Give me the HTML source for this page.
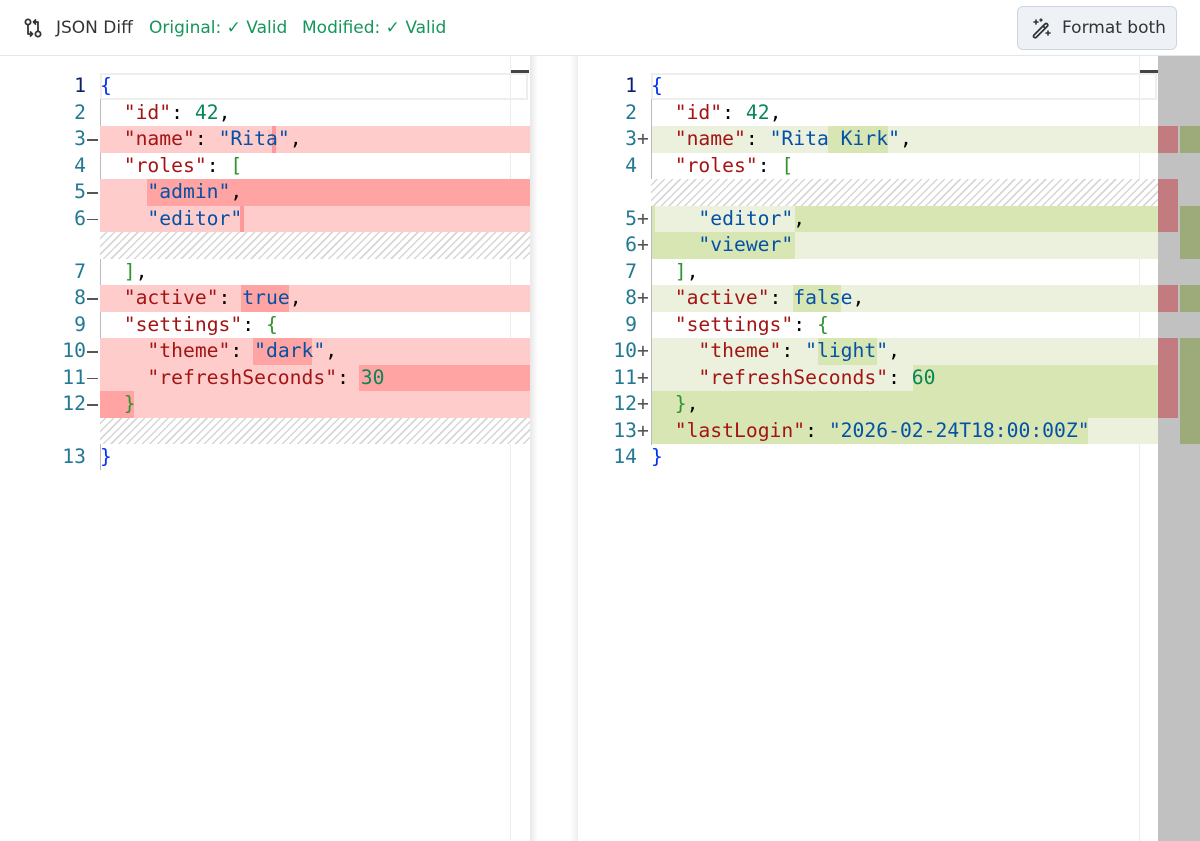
<!DOCTYPE html>
<html><head><meta charset="utf-8"><style>
*{margin:0;padding:0;box-sizing:border-box}
body{width:1200px;height:840px;overflow:hidden;background:#fff;font-family:"Liberation Sans","DejaVu Sans",sans-serif;position:relative}
.hdr{position:absolute;left:0;top:0;width:1200px;height:56px;border-bottom:1px solid #e3e6ea;background:#fff;z-index:2}
.t{position:absolute;top:18px;font-size:17px;font-family:"DejaVu Sans",sans-serif;white-space:nowrap}
.btn{position:absolute;left:1017px;top:6px;width:160px;height:44px;border:1px solid #cdd6e0;border-radius:6px;background:#eef2f7}
.w{position:absolute;left:0;top:1px;width:1200px;height:840px}
.r{position:absolute;height:26.5px;line-height:26.5px;font-family:"DejaVu Sans Mono",monospace;font-size:19.7px;white-space:pre}
.ln{position:absolute;height:26.5px;line-height:26.5px;font-family:"DejaVu Sans Mono",monospace;font-size:19.7px;text-align:right;color:#237893;white-space:pre}
.hl{position:absolute;height:26.5px}
.k{color:#a31515}.s{color:#0451a5}.n{color:#098658}.b1{color:#0431fa}.b2{color:#319331}.p{color:#000}
.hatch{position:absolute;height:26.5px;background:repeating-linear-gradient(-45deg,#fff 0 4px,#d6d6d6 4px 5.5px)}
</style></head><body>
<div class="hdr">
<svg style="position:absolute;left:23px;top:17px" width="20" height="22" viewBox="0 0 20 22" fill="none" stroke="#333" stroke-width="1.8" stroke-linecap="round" stroke-linejoin="round"><circle cx="5" cy="5" r="2.6"/><circle cx="15" cy="17" r="2.6"/><path d="M5 7.6V17h4M15 14.4V5h-4M7.5 15l2 2-2 2M12.5 3l-2 2 2 2"/></svg>
<div class="t" style="left:56px;color:#333">JSON Diff</div>
<div class="t" style="left:149px;color:#16965a">Original: ✓ Valid</div>
<div class="t" style="left:302px;color:#16965a">Modified: ✓ Valid</div>
<div class="btn">
<svg style="position:absolute;left:12px;top:10px" width="22" height="22" viewBox="0 0 22 22" fill="none" stroke="#333" stroke-width="1.8" stroke-linecap="round"><path d="M4 18L15 7a1.6 1.6 0 0 1 2.3 2.3L6.3 20.3A1.6 1.6 0 0 1 4 18zM13 9l2.3 2.3"/><path d="M6 3v4M4 5h4M18 14v4M16 16h4M11 2v2M10 3h2" stroke-width="1.6"/></svg>
<div class="t" style="left:44px;top:11px;color:#333">Format both</div>
</div>
</div>
<div class="w">
<!-- left pane -->
<div style="position:absolute;left:510px;top:55px;width:1px;height:784px;background:#ececec"></div>
<div style="position:absolute;left:511px;top:69px;width:18px;height:3px;background:#444"></div>
<div style="position:absolute;left:530px;top:55px;width:48px;height:785px;background:linear-gradient(90deg,#e8e8e8,#fff 8px,#fff 40px,#eee)"></div>
<div style="position:absolute;left:100px;top:72px;width:428px;height:26.5px;border:2px solid #eeeeee"></div>
<div style="position:absolute;left:100px;top:98px;width:1px;height:371px;background:#bbb"></div>

<div class="hl" style="left:100px;top:125px;width:430px;background:#ffcccc"></div>
<div class="hl" style="left:272px;top:125px;width:4px;background:#f99"></div>
<div class="hl" style="left:100px;top:178px;width:430px;background:#ffcccc"></div>
<div class="hl" style="left:147px;top:178px;width:383px;background:#ffa3a3"></div>
<div class="hl" style="left:100px;top:204.5px;width:430px;background:#ffcccc"></div>
<div class="hl" style="left:240px;top:204.5px;width:4px;background:#f99"></div>
<div class="hatch" style="left:100px;top:231px;width:430px"></div>
<div class="hl" style="left:100px;top:284px;width:430px;background:#ffcccc"></div>
<div class="hl" style="left:241px;top:284px;width:48px;background:#ffa3a3"></div>
<div class="hl" style="left:100px;top:337px;width:430px;height:79.5px;background:#ffcccc"></div>
<div class="hl" style="left:253px;top:337px;width:59px;background:#ffa3a3"></div>
<div class="hl" style="left:359px;top:363.5px;width:171px;background:#ffa3a3"></div>
<div class="hl" style="left:100px;top:390px;width:34px;background:#ffa3a3"></div>
<div class="hatch" style="left:100px;top:416.5px;width:430px"></div>

<div class="ln" style="left:40px;width:46px;top:72px;color:#0b216f">1</div>
<div class="ln" style="left:40px;width:46px;top:98.5px">2</div>
<div class="ln" style="left:40px;width:46px;top:125px">3</div>
<div class="ln" style="left:40px;width:46px;top:151.5px">4</div>
<div class="ln" style="left:40px;width:46px;top:178px">5</div>
<div class="ln" style="left:40px;width:46px;top:204.5px">6</div>
<div class="ln" style="left:40px;width:46px;top:257.5px">7</div>
<div class="ln" style="left:40px;width:46px;top:284px">8</div>
<div class="ln" style="left:40px;width:46px;top:310.5px">9</div>
<div class="ln" style="left:40px;width:46px;top:337px">10</div>
<div class="ln" style="left:40px;width:46px;top:363.5px">11</div>
<div class="ln" style="left:40px;width:46px;top:390px">12</div>
<div class="ln" style="left:40px;width:46px;top:443px">13</div>
<div style="position:absolute;left:87px;top:138px;width:11px;height:1.5px;background:#555"></div>
<div style="position:absolute;left:87px;top:191px;width:11px;height:1.5px;background:#555"></div>
<div style="position:absolute;left:87px;top:217.5px;width:11px;height:1.5px;background:#555"></div>
<div style="position:absolute;left:87px;top:297px;width:11px;height:1.5px;background:#555"></div>
<div style="position:absolute;left:87px;top:350px;width:11px;height:1.5px;background:#555"></div>
<div style="position:absolute;left:87px;top:376.5px;width:11px;height:1.5px;background:#555"></div>
<div style="position:absolute;left:87px;top:403px;width:11px;height:1.5px;background:#555"></div>

<div class="r" style="left:100px;top:72px"><span class="b1">{</span></div>
<div class="r" style="left:100px;top:98.5px">  <span class="k">"id"</span>: <span class="n">42</span>,</div>
<div class="r" style="left:100px;top:125px">  <span class="k">"name"</span>: <span class="s">"Rita"</span>,</div>
<div class="r" style="left:100px;top:151.5px">  <span class="k">"roles"</span>: <span class="b2">[</span></div>
<div class="r" style="left:100px;top:178px">    <span class="s">"admin"</span>,</div>
<div class="r" style="left:100px;top:204.5px">    <span class="s">"editor"</span></div>
<div class="r" style="left:100px;top:257.5px">  <span class="b2">]</span>,</div>
<div class="r" style="left:100px;top:284px">  <span class="k">"active"</span>: <span class="s">true</span>,</div>
<div class="r" style="left:100px;top:310.5px">  <span class="k">"settings"</span>: <span class="b2">{</span></div>
<div class="r" style="left:100px;top:337px">    <span class="k">"theme"</span>: <span class="s">"dark"</span>,</div>
<div class="r" style="left:100px;top:363.5px">    <span class="k">"refreshSeconds"</span>: <span class="n">30</span></div>
<div class="r" style="left:100px;top:390px">  <span class="b2">}</span></div>
<div class="r" style="left:100px;top:443px"><span class="b1">}</span></div>

<!-- right pane -->
<div style="position:absolute;left:1139px;top:55px;width:1px;height:785px;background:#ececec"></div>
<div style="position:absolute;left:1140px;top:69px;width:18px;height:3px;background:#444"></div>
<div style="position:absolute;left:1158px;top:55px;width:42px;height:785px;background:#c1c1c1"></div>
<div style="position:absolute;left:1158px;top:125px;width:20px;height:26.5px;background:#c27c80"></div>
<div style="position:absolute;left:1158px;top:178px;width:20px;height:53px;background:#c27c80"></div>
<div style="position:absolute;left:1158px;top:284px;width:20px;height:26.5px;background:#c27c80"></div>
<div style="position:absolute;left:1158px;top:337px;width:20px;height:79.5px;background:#c27c80"></div>
<div style="position:absolute;left:1180px;top:125px;width:20px;height:26.5px;background:#9dab7a"></div>
<div style="position:absolute;left:1180px;top:204.5px;width:20px;height:53px;background:#9dab7a"></div>
<div style="position:absolute;left:1180px;top:284px;width:20px;height:26.5px;background:#9dab7a"></div>
<div style="position:absolute;left:1180px;top:337px;width:20px;height:106px;background:#9dab7a"></div>
<div style="position:absolute;left:651px;top:72px;width:506px;height:26.5px;border:2px solid #eeeeee"></div>
<div style="position:absolute;left:651px;top:98px;width:1px;height:346px;background:#bbb"></div>

<div class="hl" style="left:652px;top:125px;width:506px;background:#ebf1dd"></div>
<div class="hl" style="left:828px;top:125px;width:60px;background:#d7e6b3"></div>
<div class="hatch" style="left:651px;top:178px;width:507px"></div>
<div class="hl" style="left:652px;top:204.5px;width:506px;background:#d7e6b3"></div>
<div class="hl" style="left:655px;top:204.5px;width:140px;background:#ebf1dd"></div>
<div class="hl" style="left:652px;top:231px;width:506px;background:#ebf1dd"></div>
<div class="hl" style="left:652px;top:231px;width:143px;background:#d7e6b3"></div>
<div class="hl" style="left:652px;top:284px;width:506px;background:#ebf1dd"></div>
<div class="hl" style="left:793px;top:284px;width:48px;background:#d7e6b3"></div>
<div class="hl" style="left:652px;top:337px;width:506px;background:#ebf1dd"></div>
<div class="hl" style="left:818px;top:337px;width:59px;background:#d7e6b3"></div>
<div class="hl" style="left:652px;top:363.5px;width:506px;background:#d7e6b3"></div>
<div class="hl" style="left:652px;top:363.5px;width:261px;background:#ebf1dd"></div>
<div class="hl" style="left:652px;top:390px;width:506px;background:#d7e6b3"></div>
<div class="hl" style="left:652px;top:416.5px;width:506px;background:#ebf1dd"></div>
<div class="hl" style="left:652px;top:416.5px;width:436px;background:#d7e6b3"></div>

<div class="ln" style="left:590px;width:47px;top:72px;color:#0b216f">1</div>
<div class="ln" style="left:590px;width:47px;top:98.5px">2</div>
<div class="ln" style="left:590px;width:47px;top:125px">3</div>
<div class="ln" style="left:590px;width:47px;top:151.5px">4</div>
<div class="ln" style="left:590px;width:47px;top:204.5px">5</div>
<div class="ln" style="left:590px;width:47px;top:231px">6</div>
<div class="ln" style="left:590px;width:47px;top:257.5px">7</div>
<div class="ln" style="left:590px;width:47px;top:284px">8</div>
<div class="ln" style="left:590px;width:47px;top:310.5px">9</div>
<div class="ln" style="left:590px;width:47px;top:337px">10</div>
<div class="ln" style="left:590px;width:47px;top:363.5px">11</div>
<div class="ln" style="left:590px;width:47px;top:390px">12</div>
<div class="ln" style="left:590px;width:47px;top:416.5px">13</div>
<div class="ln" style="left:590px;width:47px;top:443px">14</div>
<div class="r" style="left:637px;top:125px;color:#555">+</div>
<div class="r" style="left:637px;top:204.5px;color:#555">+</div>
<div class="r" style="left:637px;top:231px;color:#555">+</div>
<div class="r" style="left:637px;top:284px;color:#555">+</div>
<div class="r" style="left:637px;top:337px;color:#555">+</div>
<div class="r" style="left:637px;top:363.5px;color:#555">+</div>
<div class="r" style="left:637px;top:390px;color:#555">+</div>
<div class="r" style="left:637px;top:416.5px;color:#555">+</div>

<div class="r" style="left:651px;top:72px"><span class="b1">{</span></div>
<div class="r" style="left:651px;top:98.5px">  <span class="k">"id"</span>: <span class="n">42</span>,</div>
<div class="r" style="left:651px;top:125px">  <span class="k">"name"</span>: <span class="s">"Rita Kirk"</span>,</div>
<div class="r" style="left:651px;top:151.5px">  <span class="k">"roles"</span>: <span class="b2">[</span></div>
<div class="r" style="left:651px;top:204.5px">    <span class="s">"editor"</span>,</div>
<div class="r" style="left:651px;top:231px">    <span class="s">"viewer"</span></div>
<div class="r" style="left:651px;top:257.5px">  <span class="b2">]</span>,</div>
<div class="r" style="left:651px;top:284px">  <span class="k">"active"</span>: <span class="s">false</span>,</div>
<div class="r" style="left:651px;top:310.5px">  <span class="k">"settings"</span>: <span class="b2">{</span></div>
<div class="r" style="left:651px;top:337px">    <span class="k">"theme"</span>: <span class="s">"light"</span>,</div>
<div class="r" style="left:651px;top:363.5px">    <span class="k">"refreshSeconds"</span>: <span class="n">60</span></div>
<div class="r" style="left:651px;top:390px">  <span class="b2">}</span>,</div>
<div class="r" style="left:651px;top:416.5px">  <span class="k">"lastLogin"</span>: <span class="s">"2026-02-24T18:00:00Z"</span></div>
<div class="r" style="left:651px;top:443px"><span class="b1">}</span></div>
</div>
</body></html>
